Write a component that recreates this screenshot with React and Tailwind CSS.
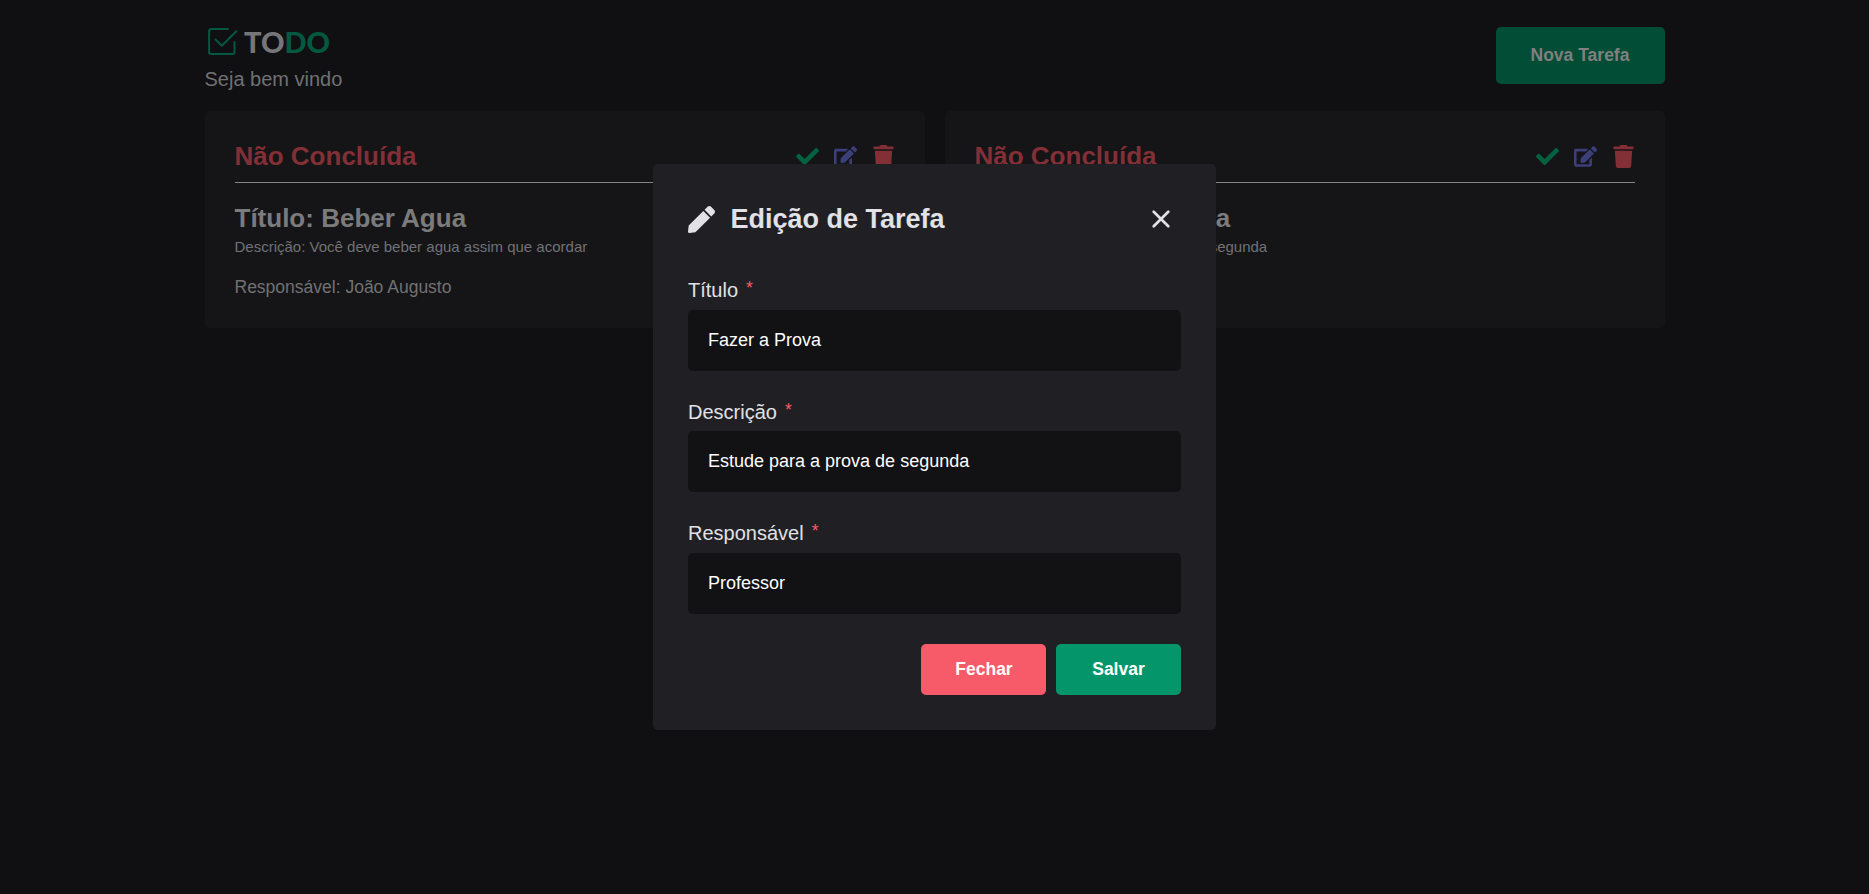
import { FaCheck, FaTrash, FaPen, FaEdit } from "react-icons/fa";

const cards = [
  { title: "Beber Agua", description: "Você deve beber agua assim que acordar", owner: "João Augusto" },
  { title: "Fazer a Prova", description: "Estude para a prova de segunda", owner: "Professor" },
];

function Logo() {
  return (
    <div className="flex h-[30px] items-start pl-[2.5px]">
      <svg className="h-[30px] w-[32px]" viewBox="0 0 32 30" fill="none" stroke="#02593f" strokeWidth="2" strokeLinecap="round" strokeLinejoin="round">
        <path d="M21 2H4.1a2 2 0 0 0-2 2v21a2 2 0 0 0 2 2H25.5a2 2 0 0 0 2-2V15" />
        <path d="M8.5 12.5l6.3 6.2L29.3 4.2" />
      </svg>
      <span className="ml-[5px] font-['Lato'] text-[29px] leading-[30px] font-black text-[#76767a]">
        TO<span className="text-[#02593f]">DO</span>
      </span>
    </div>
  );
}

function CloseIcon() {
  return (
    <svg className="size-[32px]" viewBox="0 0 32 32" fill="none" stroke="#e1e1e6" strokeWidth="2.7" strokeLinecap="round">
      <path d="M8.7 8.7l14.6 14.6M23.3 8.7L8.7 23.3" />
    </svg>
  );
}

function Card({ title, description, owner }) {
  return (
    <article className="h-[217px] flex-1 rounded-[5px] bg-[#151517] p-[30px]">
      <header className="flex h-[42px] items-start justify-between border-b border-[#848484]">
        <h2 className="text-[26px] leading-[30px] font-bold text-[#822f36]">Não Concluída</h2>
        <div className="flex items-center gap-[15px] pt-[4px]">
          <FaCheck className="size-[23px] text-[#02613f]" />
          <FaEdit className="size-[23px] text-[#3b3f7a]" />
          <FaTrash className="size-[23px] text-[#822f36]" />
        </div>
      </header>
      <h3 className="mt-[20px] text-[26px] leading-[30px] font-bold text-[#7b7b7c]">Título: {title}</h3>
      <p className="mt-[5px] text-[15px] leading-[18px] text-[#717174]">Descrição: {description}</p>
      <p className="mt-[21px] text-[17.5px] leading-[21px] text-[#717174]">Responsável: {owner}</p>
    </article>
  );
}

function Field({ label, value }) {
  return (
    <label className="flex flex-col gap-[7.8px]">
      <span className="flex h-[23px] text-[20px] leading-[23px] text-[#e1e1e6]">
        {label}
        <span className="ml-[8px] text-[17.5px] leading-[19px] text-[#f75a68]">*</span>
      </span>
      <input defaultValue={value} className="h-[61px] rounded-[5px] bg-[#121214] px-[20px] text-[18px] text-white outline-none" />
    </label>
  );
}

export default function App() {
  return (
    <div className="relative h-[894px] overflow-hidden bg-[#101012] font-['Liberation_Sans',Arial,sans-serif]">
      <main className="mx-auto w-[1460px]">
        <header className="flex h-[111px] items-start justify-between pt-[27px]">
          <div>
            <Logo />
            <p className="mt-[11px] text-[20px] leading-[23px] text-[#717174]">Seja bem vindo</p>
          </div>
          <button className="h-[57px] w-[169px] rounded-[5px] bg-[#014d35] text-[17.5px] font-bold text-[#7f807f]">Nova Tarefa</button>
        </header>
        <section className="flex gap-[20px]">
          {cards.map((card) => (
            <Card key={card.title} {...card} />
          ))}
        </section>
      </main>
      <div className="absolute inset-0 flex items-start justify-center pt-[164px]">
        <section className="h-[566px] w-[563px] rounded-[5px] bg-[#202024] p-[35px]">
          <header className="flex h-[40px] items-center justify-between pr-[4px]">
            <h1 className="flex items-center gap-[15.5px] text-[27px] font-bold text-[#e1e1e6]">
              <FaPen className="size-[27px]" />
              Edição de Tarefa
            </h1>
            <CloseIcon />
          </header>
          <form className="mt-[40.2px] flex flex-col gap-[29.6px]">
            <Field label="Título" value="Fazer a Prova" />
            <Field label="Descrição" value="Estude para a prova de segunda" />
            <Field label="Responsável" value="Professor" />
          </form>
          <footer className="mt-[30.2px] flex justify-end gap-[10px]">
            <button className="h-[51px] w-[125px] rounded-[5px] bg-[#f75a68] pl-[1px] text-[17.5px] font-bold text-white">Fechar</button>
            <button className="h-[51px] w-[125px] rounded-[5px] bg-[#04966a] text-[17.5px] font-bold text-white">Salvar</button>
          </footer>
        </section>
      </div>
    </div>
  );
}
